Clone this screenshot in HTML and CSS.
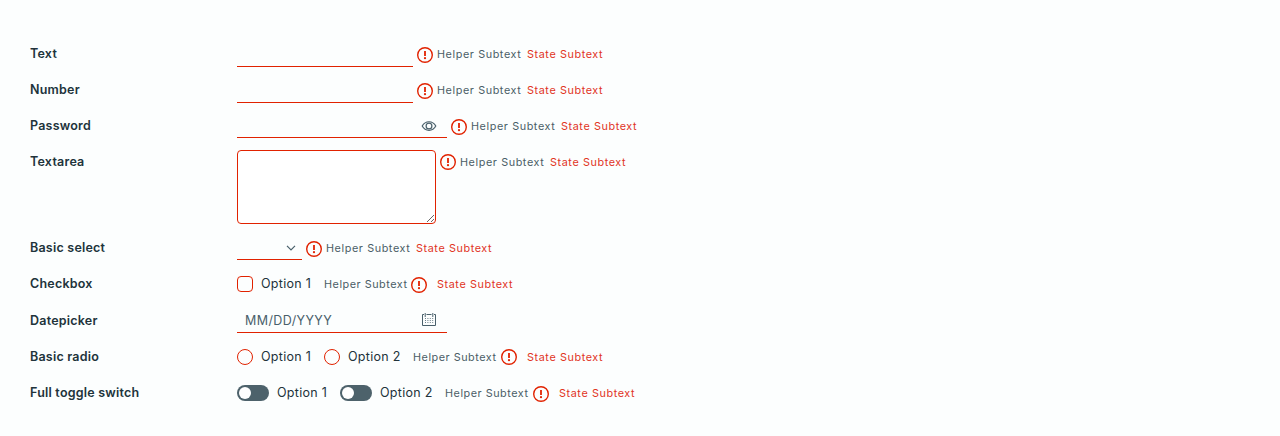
FILE: index.html
```html
<!DOCTYPE html>
<html lang="en">
<head>
<meta charset="utf-8">
<title>Form controls</title>
<link rel="stylesheet" href="styles.css">
</head>
<body>
<svg class="symbols" aria-hidden="true">
  <symbol id="error" viewBox="0 0 16 16"><circle cx="8" cy="8" r="7.3" fill="none" stroke="currentColor" stroke-width="1.4"/><path d="M8 4v4.9" stroke="currentColor" stroke-width="1.8"/><circle cx="8" cy="11.2" r="1.1" fill="currentColor"/></symbol>
  <symbol id="eye" viewBox="0 0 16 16"><path d="M1.2 8C4.4 2.3 11.6 2.3 14.8 8C11.6 13.7 4.4 13.7 1.2 8Z" fill="none" stroke="currentColor" stroke-width="1.2"/><circle cx="8" cy="8" r="2.9" fill="none" stroke="currentColor" stroke-width="1.2"/></symbol>
  <symbol id="calendar" viewBox="0 0 16 16"><path d="M3 2.5H1.5V13.5H14.5V2.5H13M5.5 2.5H10.5M4.2 1V5M11.8 1V5" fill="none" stroke="currentColor"/><path d="M4 6.5h9M4 8.5h9M4 10.5h9" fill="none" stroke="currentColor" stroke-opacity=".8" stroke-dasharray="1 1.4"/></symbol>
</svg>
<form class="form">
  <div class="row"><label class="label">Text</label><div class="controls"><input class="line-input" type="text"><svg class="error"><use href="#error"/></svg><span class="helper">Helper Subtext</span><span class="state">State Subtext</span></div></div>
  <div class="row"><label class="label">Number</label><div class="controls"><input class="line-input" type="text"><svg class="error"><use href="#error"/></svg><span class="helper">Helper Subtext</span><span class="state">State Subtext</span></div></div>
  <div class="row"><label class="label">Password</label><div class="controls"><div class="field field-password"><svg class="field-icon"><use href="#eye"/></svg></div><svg class="error"><use href="#error"/></svg><span class="helper">Helper Subtext</span><span class="state">State Subtext</span></div></div>
  <div class="row row-textarea"><label class="label">Textarea</label><div class="controls"><textarea class="textarea"></textarea><svg class="error"><use href="#error"/></svg><span class="helper">Helper Subtext</span><span class="state">State Subtext</span></div></div>
  <div class="row"><label class="label">Basic select</label><div class="controls"><div class="select"><svg class="caret" viewBox="0 0 10 6"><path d="M1 .8L5 4.8L9 .8" fill="none" stroke="currentColor" stroke-width="1.2"/></svg></div><svg class="error"><use href="#error"/></svg><span class="helper">Helper Subtext</span><span class="state">State Subtext</span></div></div>
  <div class="row row-checkbox"><label class="label">Checkbox</label><div class="controls options"><span class="box"></span><span class="option">Option 1</span><span class="helper">Helper Subtext</span><svg class="error"><use href="#error"/></svg><span class="state">State Subtext</span></div></div>
  <div class="row row-date"><label class="label">Datepicker</label><div class="controls"><div class="field field-date"><input class="date-input" placeholder="MM/DD/YYYY"><svg class="field-icon"><use href="#calendar"/></svg></div></div></div>
  <div class="row row-radio"><label class="label">Basic radio</label><div class="controls options"><span class="radio"></span><span class="option">Option 1</span><span class="radio"></span><span class="option option-two">Option 2</span><span class="helper">Helper Subtext</span><svg class="error"><use href="#error"/></svg><span class="state">State Subtext</span></div></div>
  <div class="row"><label class="label">Full toggle switch</label><div class="controls options"><span class="toggle"></span><span class="option">Option 1</span><span class="toggle"></span><span class="option option-two">Option 2</span><span class="helper">Helper Subtext</span><svg class="error"><use href="#error"/></svg><span class="state">State Subtext</span></div></div>
</form>
</body>
</html>
```
FILE: styles.css
```css
* { box-sizing: border-box; }
body { margin: 0; background: #fcfefe; color: #21333b; font-family: Inter, "Open Sans", sans-serif; font-size: 12.5px; }
.symbols { display: none; }
.form { padding: 36px 30px; }
.row { display: grid; grid-template-columns: 207px 1fr; height: 36px; }
.row-textarea { height: 86px; }
.row-date { height: 37px; }
.label { font-weight: 600; line-height: 36px; letter-spacing: .22px; }
.row-date .label { line-height: 37px; }
.controls { display: flex; align-items: flex-start; white-space: nowrap; }
.line-input { width: 176px; height: 24px; margin: 7px 0 0; padding: 0; border: 0; border-bottom: 1px solid #e12200; background: transparent; }
.error { flex: none; width: 16px; height: 16px; margin: 11px 4px 0; color: #e12200; }
.helper, .state { font-size: 10.8px; line-height: 37px; letter-spacing: .6px; }
.helper { width: 90px; color: #4a5d66; }
.state { color: #e1341f; }
.field { display: flex; align-items: center; width: 210px; border-bottom: 1px solid #e12200; color: #49606b; }
.field-password { height: 24px; margin-top: 6px; justify-content: flex-end; padding-right: 10px; }
.field-icon { flex: none; width: 16px; height: 16px; }
.textarea { width: 199px; height: 74px; margin: 6px 0 0; border: 1px solid #e12200; border-radius: 4px; background: #fff; }
.row-textarea .error { margin-top: 10px; }
.select { display: flex; align-items: center; justify-content: flex-end; width: 65px; height: 24px; margin-top: 6px; padding-right: 6px; border-bottom: 1px solid #e12200; }
.caret { width: 10px; height: 6px; color: #49606b; }
.box { width: 16px; height: 16px; margin: 10px 8px 0 0; border: 1px solid #e12200; border-radius: 4px; }
.option { width: 63px; line-height: 36px; letter-spacing: .3px; }
.option-two { width: 65px; }
.options .helper { width: 84px; letter-spacing: .54px; }
.row-checkbox .helper { width: 83px; }
.options .error { margin-right: 10px; }
.field-date { height: 25px; margin-top: 6px; padding: 0 10px 0 8px; }
.date-input { flex: 1; min-width: 0; padding: 0; border: 0; background: transparent; font: inherit; letter-spacing: .4px; }
.date-input::placeholder { color: #49606b; opacity: 1; }
.radio { width: 16px; height: 16px; margin: 10px 8px 0 0; border: 1px solid #e12200; border-radius: 50%; }
.row-radio .error { margin-top: 10px; }
.toggle { width: 32px; height: 16px; margin: 10px 8px 0 0; padding: 2px; border-radius: 8px; background: #4d626b; }
.toggle::before { content: ""; display: block; width: 12px; height: 12px; border-radius: 50%; background: #fff; }
```
